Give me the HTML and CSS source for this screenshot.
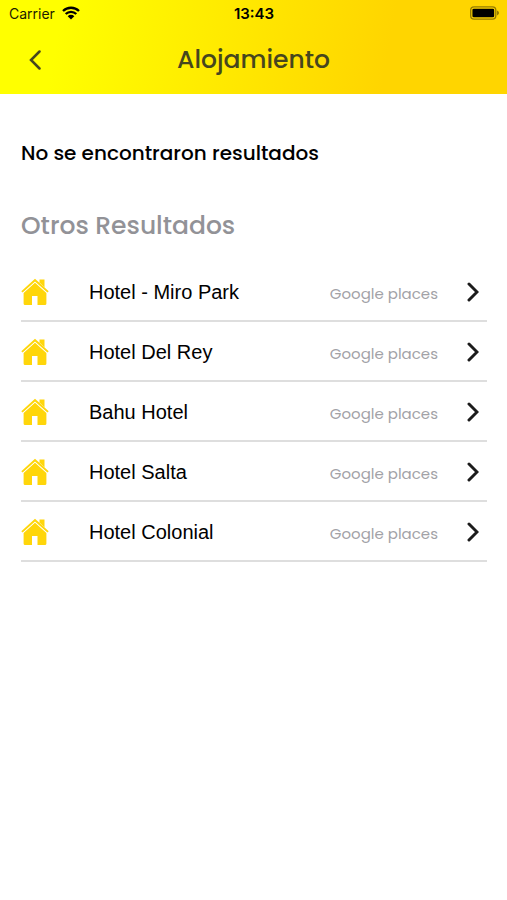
FILE: index.html
```html
<!DOCTYPE html>
<html lang="es">
<head>
<meta charset="utf-8">
<meta name="viewport" content="width=device-width, initial-scale=1">
<title>Alojamiento</title>
<link rel="stylesheet" href="styles.css">
</head>
<body>
<svg class="sprite" aria-hidden="true">
  <symbol id="house" viewBox="0 0 28 28">
    <path d="M18.500 4.500V1.500H23.500V9.500Z"/>
    <path d="M14 0.800 0.300 13.200 1.600 14.500 14 3.400 26.400 14.500 27.700 13.200Z"/>
    <path d="M14 4.700 2.600 15V25.500Q2.600 27 4.100 27H11V18H16.500V27H23.900Q25.400 27 25.400 25.500V15Z"/>
  </symbol>
  <symbol id="chevron" viewBox="0 0 12 20">
    <path d="M2 2 10 10 2 18" fill="none" stroke="currentColor" stroke-width="3" stroke-linecap="round" stroke-linejoin="miter"/>
  </symbol>
</svg>
<header class="header">
  <div class="status">
    <div class="carrier">
      <span>Carrier</span>
      <svg class="wifi" viewBox="0 0 18 14" aria-hidden="true">
        <path d="M1 5A11.500 11.500 0 0 1 17 5M3.700 8A7.500 7.500 0 0 1 14.300 8" fill="none" stroke="currentColor" stroke-width="2.300"/>
        <path d="M9 13.500 5.700 10.200A4.700 4.700 0 0 1 12.300 10.200Z" fill="currentColor"/>
      </svg>
    </div>
    <time class="clock">13:43</time>
    <svg class="battery" viewBox="0 0 30 14" aria-hidden="true">
      <rect x="0.700" y="0.700" width="26" height="12.600" rx="3.500" fill="none" stroke="#000" stroke-opacity=".42" stroke-width="1.400"/>
      <rect x="2.500" y="2.500" width="22.500" height="9" rx="1.500"/>
      <path d="M28 4.500Q30 5.500 30 7T28 9.500Z" opacity=".45"/>
    </svg>
  </div>
  <div class="bar">
    <button class="back" type="button" aria-label="Volver"><svg class="back-icon" viewBox="0 0 12 20" aria-hidden="true"><path d="M10.500 1.500 2 10 10.500 18.500" fill="none" stroke="currentColor" stroke-width="2.500" stroke-linecap="round"/></svg></button>
    <h1 class="title">Alojamiento</h1>
  </div>
</header>
<main class="content">
  <p class="empty">No se encontraron resultados</p>
  <h2 class="subtitle">Otros Resultados</h2>
  <ul class="list">
    <li><a class="row" href="#"><svg class="house"><use href="#house"/></svg><span class="name">Hotel - Miro Park</span><span class="source">Google places</span><svg class="chevron"><use href="#chevron"/></svg></a></li>
    <li><a class="row" href="#"><svg class="house"><use href="#house"/></svg><span class="name">Hotel Del Rey</span><span class="source">Google places</span><svg class="chevron"><use href="#chevron"/></svg></a></li>
    <li><a class="row" href="#"><svg class="house"><use href="#house"/></svg><span class="name">Bahu Hotel</span><span class="source">Google places</span><svg class="chevron"><use href="#chevron"/></svg></a></li>
    <li><a class="row" href="#"><svg class="house"><use href="#house"/></svg><span class="name">Hotel Salta</span><span class="source">Google places</span><svg class="chevron"><use href="#chevron"/></svg></a></li>
    <li><a class="row" href="#"><svg class="house"><use href="#house"/></svg><span class="name">Hotel Colonial</span><span class="source">Google places</span><svg class="chevron"><use href="#chevron"/></svg></a></li>
  </ul>
</main>
</body>
</html>
```
FILE: styles.css
```css
* {
  box-sizing: border-box;
}

body {
  margin: 0;
  background: #fff;
  color: #000;
  font-family: Poppins, Inter, sans-serif;
}

h1, h2, p, ul {
  margin: 0;
  padding: 0;
}

.sprite {
  display: none;
}

.header {
  background: linear-gradient(100deg, #ff0 12%, #ffd500 76%);
  padding-bottom: 8px;
}

.status {
  display: grid;
  grid-template-columns: 1fr auto 1fr;
  align-items: center;
  height: 26px;
  padding: 0 8px 0 9px;
  font-family: Inter, sans-serif;
  font-size: 14px;
}

.carrier {
  display: flex;
  align-items: center;
  gap: 7px;
  color: #1c1c00;
}

.wifi {
  width: 18px;
  height: 14px;
  color: #000;
}

.clock {
  font-weight: 600;
  font-size: 15px;
}

.battery {
  justify-self: end;
  width: 29px;
  height: 14px;
}

.bar {
  display: grid;
  grid-template-columns: 70px 1fr 70px;
  align-items: center;
  height: 60px;
  padding-top: 8px;
  color: #46461e;
}

.back {
  display: flex;
  justify-content: center;
  padding: 12px 0;
  border: 0;
  background: none;
  color: inherit;
}

.back-icon {
  width: 12px;
  height: 20px;
}

.title {
  font-size: 25px;
  font-weight: 500;
  line-height: 36px;
  text-align: center;
}

.content {
  padding: 44px 20px 0 21px;
}

.empty {
  font-size: 20px;
  font-weight: 500;
  line-height: 30px;
}

.subtitle {
  margin-top: 40px;
  color: #929297;
  font-size: 25px;
  font-weight: 500;
  line-height: 36px;
}

.list {
  margin-top: 18px;
  list-style: none;
}

.row {
  display: flex;
  align-items: center;
  height: 60px;
  padding: 2px 8px 0 0;
  border-bottom: 2px solid #dedede;
  color: inherit;
  text-decoration: none;
}

.house {
  width: 28px;
  height: 28px;
  fill: #ffd60a;
}

.name {
  flex: 1;
  margin-left: 40px;
  font-family: "Liberation Sans", Arial, sans-serif;
  font-size: 20px;
}

.source {
  padding-top: 2px;
  color: #a2a2a7;
  font-size: 15px;
}

.chevron {
  width: 12px;
  height: 20px;
  margin-left: 29px;
  color: #1c1c1c;
}
```
